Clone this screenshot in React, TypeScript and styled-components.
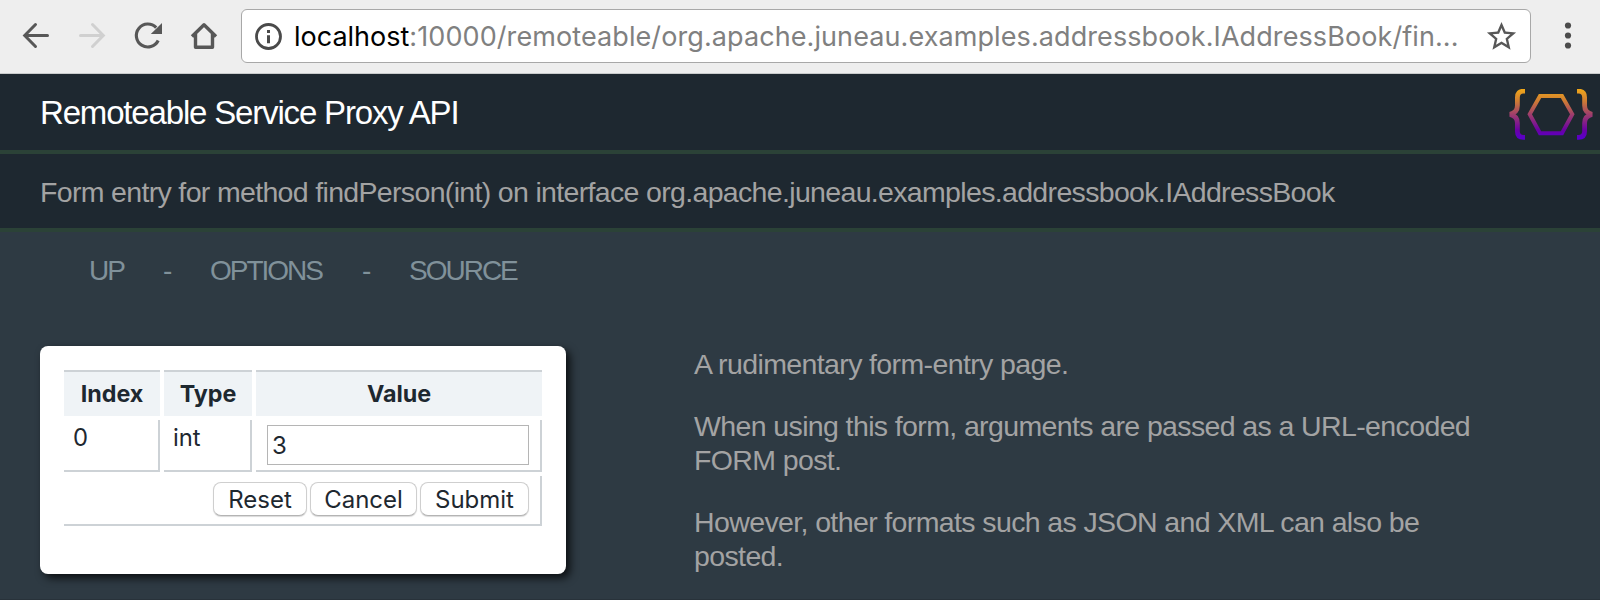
import React from 'react';
import styled, { createGlobalStyle } from 'styled-components';

const GlobalStyle = createGlobalStyle`
  * { box-sizing: border-box; }
  body { margin: 0; background: #2e3a43; overflow: hidden; }
`;

const pageFont = '"Liberation Sans", Arial, sans-serif';
const systemFont = 'Inter, Roboto, sans-serif';

const Page = styled.div`
  display: flex;
  flex-direction: column;
  height: 600px;
  background: #2e3a43;
  border-bottom: 1px solid #28323a;
  font-family: ${pageFont};
  color: #a3a3a3;
`;

const Toolbar = styled.div`
  display: flex;
  align-items: center;
  flex: none;
  height: 74px;
  padding: 0 12px 1px 16px;
  background: #eeeeee;
  border-bottom: 1px solid #c9cbcc;
`;

const NavIcons = styled.div`
  display: flex;
  gap: 16px;
  margin-right: 17px;
`;

const Icon = styled.svg<{ $w?: number; $h?: number; $color?: string }>`
  display: block;
  flex: none;
  width: ${(p) => p.$w ?? 40}px;
  height: ${(p) => p.$h ?? p.$w ?? 40}px;
  color: ${(p) => p.$color ?? '#575757'};
`;

const AddressBar = styled.div`
  display: flex;
  align-items: center;
  width: 1290px;
  height: 54px;
  margin-right: 17px;
  padding: 0 11px 0 12px;
  background: #fff;
  border: 1px solid #a8a8a8;
  border-radius: 6px;
`;

const Url = styled.div`
  flex: 1;
  margin-left: 10px;
  padding-top: 1px;
  font: 27px/40px ${systemFont};
  letter-spacing: 0.09px;
  white-space: nowrap;
  color: #808080;
`;

const Host = styled.span`
  color: #000;
  letter-spacing: 0;
`;

const Header = styled.header`
  display: flex;
  justify-content: space-between;
  flex: none;
  height: 80px;
  padding: 15px 7px 0 40px;
  background: #1e2830;
  border-bottom: 4px solid #2b4237;
`;

const Title = styled.h1`
  margin: 5px 0 0;
  font-weight: 400;
  font-size: 33px;
  line-height: 38px;
  letter-spacing: -1.17px;
  color: #fff;
`;

const Description = styled.div`
  flex: none;
  height: 78px;
  padding: 21px 0 0 40px;
  background: #1e2830;
  border-bottom: 4px solid #2b4237;
  font-size: 28.5px;
  line-height: 34px;
  letter-spacing: -0.665px;
  white-space: nowrap;
`;

const Nav = styled.nav`
  display: flex;
  padding: 22px 0 0 89px;
  font-size: 28px;
  line-height: 34px;
  letter-spacing: -2px;
  color: #80919a;
`;

const NavItem = styled.span<{ $width: number }>`
  width: ${(p) => p.$width}px;
`;

const Content = styled.main`
  display: flex;
  align-items: flex-start;
  margin-top: 58px;
  padding-left: 40px;
`;

const Card = styled.section`
  width: 526px;
  height: 228px;
  padding: 24px;
  background: #fff;
  border-radius: 8px;
  box-shadow: 4px 4px 8px rgba(0, 0, 0, 0.75);
  color: #1e2830;
  font-family: ${systemFont};
`;

const Table = styled.div`
  display: grid;
  grid-template-columns: 96px 88px 286px;
  grid-template-rows: 46px 52px 50px;
  gap: 4px;
  width: 478px;
`;

const HeadCell = styled.div`
  background: #eff3f6;
  border-top: 2px solid #cdd2d6;
  font-size: 23.3px;
  font-weight: 700;
  line-height: 43px;
  text-align: center;
`;

const Cell = styled.div`
  padding: 4px 0 0 9px;
  border-right: 2px solid #cdd2d6;
  border-bottom: 2px solid #cdd2d6;
  font-size: 23.8px;
  line-height: 28px;
`;

const InputCell = styled(Cell)`
  padding: 5px 0 0 11px;
`;

const TextInput = styled.input`
  display: block;
  width: 262px;
  height: 40px;
  padding: 1px 4px 0;
  border: 1px solid #b5b5b5;
  border-radius: 0;
  outline: none;
  background: #fff;
  color: #1e2830;
  font: 24px/36px ${systemFont};
`;

const ButtonCell = styled(Cell)`
  grid-column: 1 / -1;
  display: flex;
  justify-content: flex-end;
  gap: 3px;
  padding: 6px 11px 0 0;
`;

const Button = styled.button<{ $width: number }>`
  width: ${(p) => p.$width}px;
  height: 34px;
  padding: 1px 0 0;
  border: 1px solid #cfcfcf;
  border-bottom-color: #b4b4b4;
  border-radius: 8px;
  box-shadow: 0 1px 1px rgba(0, 0, 0, 0.15);
  background: #fff;
  color: #1e2830;
  font: 24px/31px ${systemFont};
`;

const Aside = styled.aside`
  display: flex;
  flex-direction: column;
  gap: 28px;
  width: 790px;
  margin: 1px 0 0 128px;
  font-size: 28.5px;
  line-height: 34px;
  letter-spacing: -0.62px;
`;

const Paragraph = styled.p`
  margin: 0;
`;

function Logo() {
  return (
    <Icon viewBox="0 0 84 52" $w={84} $h={52}>
      <defs>
        <linearGradient id="logo" gradientUnits="userSpaceOnUse" x1="0" y1="0" x2="0" y2="50">
          <stop offset="0" stopColor="#f0a818" />
          <stop offset="0.25" stopColor="#cd7a35" />
          <stop offset="0.5" stopColor="#a0406a" />
          <stop offset="0.82" stopColor="#6a00a4" />
          <stop offset="1" stopColor="#5800cc" />
        </linearGradient>
      </defs>
      <g fill="none" stroke="url(#logo)" strokeWidth="4.8">
        <path d="M16 2.2H14.5Q8.4 2.2 8.4 8.5V16.5Q8.4 23.5 1 25.3Q8.4 27 8.4 34V42.3Q8.4 48.4 14.5 48.4H16" />
        <path d="M68 2.2H69.5Q75.6 2.2 75.6 8.5V16.5Q75.6 23.5 83 25.3Q75.6 27 75.6 34V42.3Q75.6 48.4 69.5 48.4H68" />
        <path d="M31 6.9H53L63.3 25.3L53 44.2H31L20.7 25.3Z" strokeWidth="4" />
      </g>
    </Icon>
  );
}

export default function App() {
  return (
    <Page>
      <GlobalStyle />
      <Toolbar>
        <NavIcons>
          <Icon viewBox="0 0 40 40" fill="none" stroke="currentColor" strokeWidth="3" strokeLinecap="round">
            <path d="M31.5 19.5H9M19.5 8.5L8.7 19.5L19.5 30.5" />
          </Icon>
          <Icon viewBox="0 0 40 40" $color="#d0d0d0" fill="none" stroke="currentColor" strokeWidth="3" strokeLinecap="round">
            <path d="M8.5 19.5H31M20.5 8.5L31.3 19.5L20.5 30.5" />
          </Icon>
          <Icon viewBox="0 0 40 40" fill="currentColor">
            <path d="M30.2 24.5A11.5 11.5 0 1 1 28.2 11.6" fill="none" stroke="currentColor" strokeWidth="3.1" />
            <path d="M34 7V18H22.8Z" />
          </Icon>
          <Icon viewBox="0 0 40 40" fill="none" stroke="currentColor" strokeWidth="3.4">
            <path d="M8 20.5L20 8.7L32 20.5M11.5 18V31.2H28.5V18" strokeLinejoin="round" />
          </Icon>
        </NavIcons>
        <AddressBar>
          <Icon viewBox="0 0 30 30" $w={30} $color="#4a4a4a">
            <circle cx="14.5" cy="15.5" r="12" fill="none" stroke="currentColor" strokeWidth="2.8" />
            <path d="M13 9h3v3h-3zM13 14.2h3v8h-3z" fill="currentColor" />
          </Icon>
          <Url>
            <Host>localhost</Host>:10000/remoteable/org.apache.juneau.examples.addressbook.IAddressBook/fin...
          </Url>
          <Icon viewBox="0 0 24 24" $w={35} fill="currentColor">
            <path d="M22 9.24l-7.19-.62L12 2 9.19 8.63 2 9.24l5.46 4.73L5.82 21 12 17.27 18.18 21l-1.63-7.03L22 9.24zM12 15.4l-3.76 2.27 1-4.28-3.32-2.88 4.38-.38L12 6.1l1.71 4.04 4.38.38-3.32 2.88 1 4.28L12 15.4z" />
          </Icon>
        </AddressBar>
        <Icon viewBox="0 0 40 40" fill="currentColor" $color="#4c4c4c">
          <circle cx="20" cy="9.5" r="3.1" />
          <circle cx="20" cy="19.5" r="3.1" />
          <circle cx="20" cy="29.5" r="3.1" />
        </Icon>
      </Toolbar>
      <Header>
        <Title>Remoteable Service Proxy API</Title>
        <Logo />
      </Header>
      <Description>
        Form entry for method findPerson(int) on interface org.apache.juneau.examples.addressbook.IAddressBook
      </Description>
      <Nav>
        <NavItem $width={74}>UP</NavItem>
        <NavItem $width={47}>-</NavItem>
        <NavItem $width={152}>OPTIONS</NavItem>
        <NavItem $width={47}>-</NavItem>
        <NavItem $width={120}>SOURCE</NavItem>
      </Nav>
      <Content>
        <Card>
          <Table>
            <HeadCell>Index</HeadCell>
            <HeadCell>Type</HeadCell>
            <HeadCell>Value</HeadCell>
            <Cell>0</Cell>
            <Cell>int</Cell>
            <InputCell>
              <TextInput defaultValue="3" />
            </InputCell>
            <ButtonCell>
              <Button $width={94}>Reset</Button>
              <Button $width={107}>Cancel</Button>
              <Button $width={109}>Submit</Button>
            </ButtonCell>
          </Table>
        </Card>
        <Aside>
          <Paragraph>A rudimentary form-entry page.</Paragraph>
          <Paragraph>When using this form, arguments are passed as a URL-encoded FORM post.</Paragraph>
          <Paragraph>However, other formats such as JSON and XML can also be posted.</Paragraph>
        </Aside>
      </Content>
    </Page>
  );
}
